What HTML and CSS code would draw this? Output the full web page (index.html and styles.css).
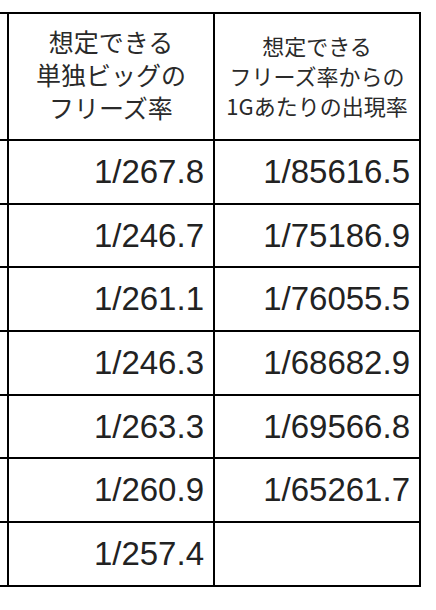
FILE: index.html
```html
<!DOCTYPE html>
<html lang="ja">
<head>
<meta charset="utf-8">
<link rel="stylesheet" href="styles.css">
</head>
<body>
<div class="sheet">
  <div class="cell stub head"></div>
  <div class="cell head h1">想定できる<br>単独ビッグの<br>フリーズ率</div>
  <div class="cell head h2">想定できる<br>フリーズ率からの<br>1Gあたりの出現率</div>

  <div class="cell stub"></div><div class="cell num">1/267.8</div><div class="cell num">1/85616.5</div>
  <div class="cell stub"></div><div class="cell num">1/246.7</div><div class="cell num">1/75186.9</div>
  <div class="cell stub"></div><div class="cell num">1/261.1</div><div class="cell num">1/76055.5</div>
  <div class="cell stub"></div><div class="cell num">1/246.3</div><div class="cell num">1/68682.9</div>
  <div class="cell stub"></div><div class="cell num">1/263.3</div><div class="cell num">1/69566.8</div>
  <div class="cell stub"></div><div class="cell num">1/260.9</div><div class="cell num">1/65261.7</div>
  <div class="cell stub"></div><div class="cell num">1/257.4</div><div class="cell num"></div>
</div>
</body>
</html>
```
FILE: styles.css
```css
html, body {
  margin: 0;
  padding: 0;
  background: #ffffff;
  overflow: hidden;
}
.sheet {
  display: grid;
  grid-template-columns: 42px 206px 206px;
  grid-template-rows: 127px repeat(7, 63.7px);
  margin-top: 12px;
  margin-left: -33px;
  width: max-content;
  border-top: 2px solid #000;
}
.cell {
  box-sizing: border-box;
  border-right: 2px solid #000;
  border-bottom: 2px solid #000;
  display: flex;
  align-items: center;
  justify-content: flex-end;
  color: #222;
}
.head {
  justify-content: center;
  text-align: center;
  font-family: "Noto Sans CJK JP", "Liberation Sans", sans-serif;
  color: #2a2a2a;
}
.h1 {
  font-size: 25px;
  line-height: 33px;
  padding-bottom: 4px;
}
.h2 {
  font-size: 22px;
  line-height: 30px;
  padding-bottom: 3px;
}
.num {
  font-family: "Liberation Sans", Arial, sans-serif;
  font-size: 33px;
  padding-right: 9px;
}
```
